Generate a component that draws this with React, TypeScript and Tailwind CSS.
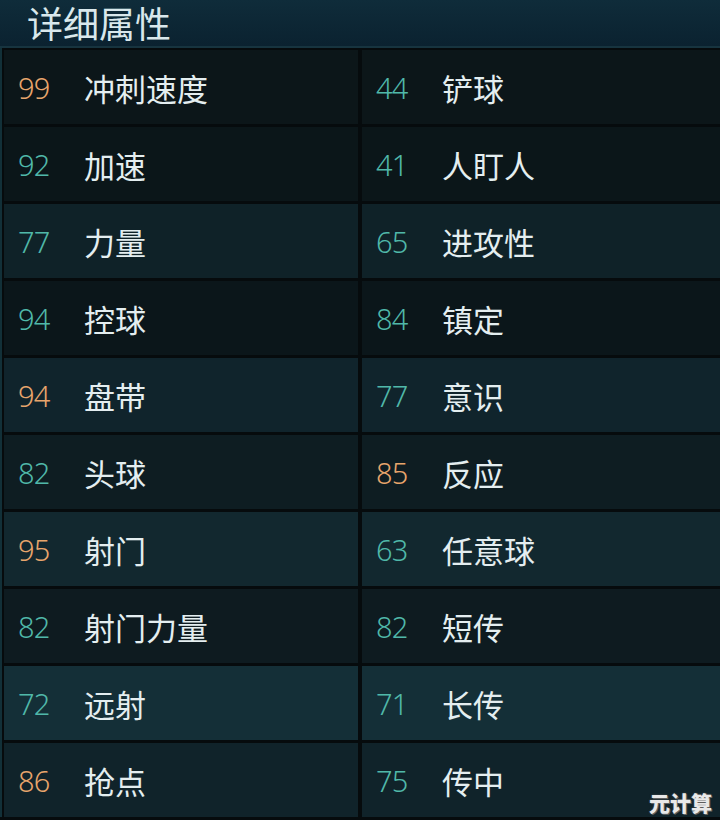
const rows: [number, string, number, string, string][] = [
  [99, "冲刺速度", 44, "铲球", "bg-[#0c1619]"],
  [92, "加速", 41, "人盯人", "bg-[#0b1619]"],
  [77, "力量", 65, "进攻性", "bg-[#0f2228]"],
  [94, "控球", 84, "镇定", "bg-[#0b161a]"],
  [94, "盘带", 77, "意识", "bg-[#10242c]"],
  [82, "头球", 85, "反应", "bg-[#0e1d22]"],
  [95, "射门", 63, "任意球", "bg-[#12282f]"],
  [82, "射门力量", 82, "短传", "bg-[#0e1b20]"],
  [72, "远射", 71, "长传", "bg-[#142f37]"],
  [86, "抢点", 75, "传中", "bg-[#10232a]"],
];

// orange values, keyed by label
const hot = new Set(["冲刺速度", "盘带", "射门", "抢点", "反应"]);

function Cell({ value, label, bg }: { value: number; label: string; bg: string }) {
  return (
    <div className={`${bg} flex items-center h-[74px]`}>
      <span
        className={`w-[80px] pl-[14px] text-[29px] font-light leading-none tracking-tight ${
          hot.has(label) ? "text-[#e8a56c]" : "text-[#50b8a9]"
        }`}
        style={{ fontFamily: '"Noto Sans", "DejaVu Sans", sans-serif' }}
      >
        {value}
      </span>
      <span className="text-[31px] leading-none text-[#e4eef0]">{label}</span>
    </div>
  );
}

export default function App() {
  return (
    <div
      className="w-[720px] h-[820px] bg-[#060b0d] overflow-hidden relative"
      style={{ fontFamily: '"Noto Sans CJK SC", "Noto Sans", sans-serif' }}
    >
      <div className="h-[48px] bg-gradient-to-b from-[#0f2c3a] to-[#0b2230] border-b-2 border-[#17343f] pl-[27px]">
        <div className="text-[36px] leading-[44px] text-[#d9e8ec]">详细属性</div>
      </div>
      <div className="grid grid-cols-[354px_358px] gap-x-[4px] gap-y-[3px] pt-[2px] pl-[2px] border-l-2 border-[#123038]">
        {rows.map(([lv, ll, rv, rl, bg]) => (
          <>
            <Cell key={ll + "l"} value={lv} label={ll} bg={bg} />
            <Cell key={rl + "r"} value={rv} label={rl} bg={bg} />
          </>
        ))}
      </div>
      <div className="absolute right-[8px] bottom-[7px] text-[21px] font-black text-[#e8e8e8] leading-none [text-shadow:0_0_2px_#555,1px_1px_0_#666]">
        元计算
      </div>
    </div>
  );
}
